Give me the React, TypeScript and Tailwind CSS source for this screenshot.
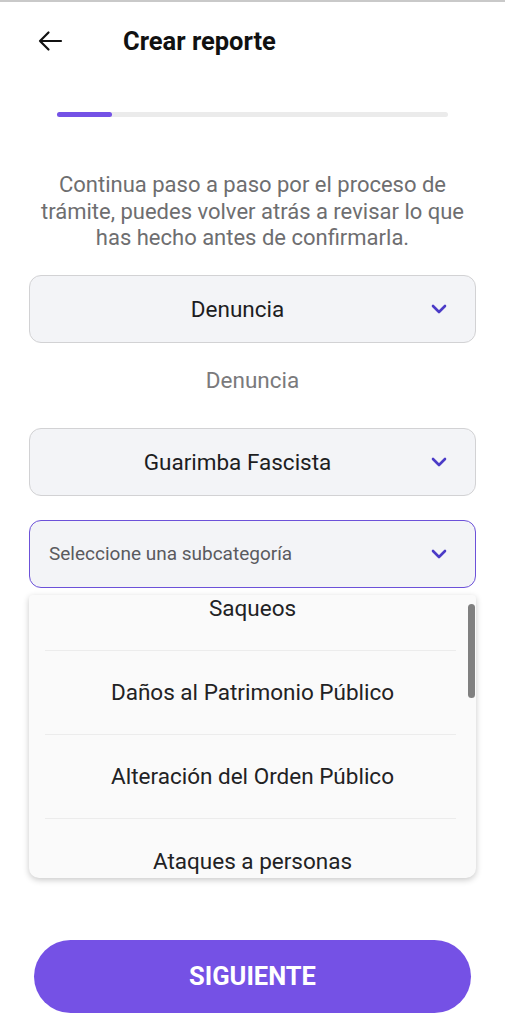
import React from "react";

const Chevron = () => (
  <svg width="16" height="10" viewBox="0 0 16 10" fill="none">
    <path d="M2 2 L8 8 L14 2" stroke="#4b3bc7" strokeWidth="2.6" strokeLinecap="round" strokeLinejoin="round" />
  </svg>
);

const Select = ({ text, active, placeholder }: { text: string; active?: boolean; placeholder?: boolean }) => (
  <div
    className={`flex h-[68px] items-center rounded-[12px] border-[1.5px] bg-[#f3f4f7] pl-4 pr-[28px] ${
      active ? "border-[#6c51d9]" : "border-[#d2d2d4]"
    }`}
  >
    {placeholder ? (
      <span className="flex-1 pl-[3px] text-[19px] leading-[24px] text-[#5a5a5e]">{text}</span>
    ) : (
      <span className="flex-1 pr-[2px] text-center text-[22.5px] leading-[28px] text-[#1d1d1f]">{text}</span>
    )}
    <Chevron />
  </div>
);

export default function App() {
  const items = ["Saqueos", "Daños al Patrimonio Público", "Alteración del Orden Público", "Ataques a personas"];
  return (
    <div className="min-h-[1024px] w-[505px] border-t-2 border-[#c9c9c9] bg-white" style={{ fontFamily: "Roboto, 'Noto Sans', sans-serif" }}>
      <div className="flex h-[80px] items-center pl-[37px] pb-[2px]">
        <svg width="26" height="24" viewBox="0 0 26 24" fill="none">
          <path d="M24 12 H3 M11.5 3.5 L3 12 L11.5 20.5" stroke="#111" strokeWidth="2.2" strokeLinecap="round" strokeLinejoin="round" />
        </svg>
        <h1 className="ml-[60px] text-[25.5px] leading-[30px] font-bold text-[#111]">Crear reporte</h1>
      </div>
      <div className="mx-[57px] mt-[30px] h-[5px] rounded-full bg-[#ebebeb]">
        <div className="h-full w-[55px] rounded-full bg-[#7452e6]" />
      </div>
      <p className="mt-[55px] px-[28px] text-center text-[22px] leading-[26.5px] text-[#6e6e70]">
        Continua paso a paso por el proceso de trámite, puedes volver atrás a revisar lo que has hecho antes de confirmarla.
      </p>
      <div className="mx-[29px] mt-[23px]">
        <Select text="Denuncia" />
      </div>
      <div className="mt-[20px] text-center text-[22.5px] leading-[34px] text-[#7a7a7c]">Denuncia</div>
      <div className="mx-[29px] mt-[31px]">
        <Select text="Guarimba Fascista" />
      </div>
      <div className="mx-[29px] mt-[24px]">
        <Select text="Seleccione una subcategoría" active placeholder />
      </div>
      <div className="relative mx-[29px] mt-[7px] h-[283px] overflow-hidden rounded-b-[10px] rounded-t-[4px] bg-[#fafafa] shadow-[0_2px_6px_rgba(0,0,0,0.22)]">
        <div className="-mt-[28px]">
          {items.map((t, i) => (
            <div key={t} className={`ml-4 mr-5 flex h-[84px] items-center justify-center ${i < items.length - 1 ? "border-b border-[#ececec]" : ""}`}>
              <span className="-mr-1 text-[22.5px] leading-[28px] text-[#222224]">{t}</span>
            </div>
          ))}
        </div>
        <div className="absolute right-[1px] top-[9px] h-[94px] w-[7px] rounded-full bg-[#808080]" />
      </div>
      <div className="mx-[34px] mt-[62px] flex h-[73px] items-center justify-center rounded-full bg-[#7551e5]">
        <span className="text-[25.5px] leading-[30px] font-bold text-white">SIGUIENTE</span>
      </div>
    </div>
  );
}
